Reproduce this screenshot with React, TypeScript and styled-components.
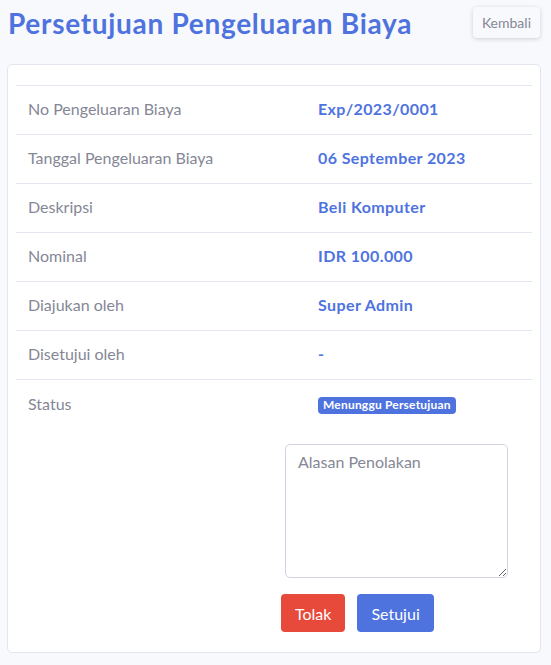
import React from "react";
import styled, { createGlobalStyle } from "styled-components";

const Global = createGlobalStyle`
  html, body { margin: 0; padding: 0; background: #f8f9fc; }
  body { font-family: Lato, "Noto Sans", sans-serif; color: #858796; }
  * { box-sizing: border-box; }
`;

const Page = styled.div`
  padding: 0 10px 12px 7px;
  width: 551px;
`;

const Header = styled.div`
  display: flex;
  justify-content: space-between;
  align-items: flex-start;
  padding: 7px 1px 0 1px;
  height: 64px;
`;

const Title = styled.h1`
  margin: 0;
  font-size: 28px;
  font-weight: 700;
  line-height: 33px;
  letter-spacing: 0.7px;
  color: #4e73df;
`;

const BackButton = styled.button`
  font-family: inherit;
  font-size: 14px;
  color: #858796;
  background: #f8f9fc;
  border: none;
  border-radius: 4px;
  box-shadow: 0 1px 4px rgba(58, 59, 69, 0.22);
  height: 31px;
  padding: 0 9px;
  cursor: pointer;
`;

const Card = styled.div`
  background: #fff;
  border: 1px solid #e3e6f0;
  border-radius: 5px;
  padding: 20px 8px 20px 8px;
`;

const Table = styled.div`
  border-top: 1px solid #e3e6f0;
`;

const Row = styled.div<{ $last?: boolean }>`
  display: grid;
  grid-template-columns: 290px 1fr;
  height: 49px;
  align-items: center;
  padding-bottom: 3px;
  border-bottom: ${(p) => (p.$last ? "none" : "1px solid #e3e6f0")};
`;

const Label = styled.div`
  padding-left: 12px;
  font-size: 16px;
  color: #858796;
`;

const Value = styled.div`
  padding-left: 12px;
  font-size: 16px;
  font-weight: 700;
  letter-spacing: 0.4px;
  color: #4e73df;
`;

const Badge = styled.span`
  display: inline-block;
  background: #4e73df;
  color: #fff;
  font-size: 12px;
  font-weight: 700;
  letter-spacing: 0.2px;
  border-radius: 4px;
  padding: 2px 5px 3px;
  line-height: 12px;
`;

const Form = styled.div`
  display: flex;
  flex-direction: column;
  align-items: flex-start;
  padding-left: 265px;
  margin-top: 15px;
  gap: 16px;
`;

const TextArea = styled.textarea`
  margin-left: 4px;
  width: 223px;
  height: 134px;
  border: 1px solid #d1d3e2;
  border-radius: 5px;
  padding: 7px 12px;
  font-family: inherit;
  font-size: 16px;
  color: #6e707e;
  &::placeholder { color: #858796; }
`;

const Actions = styled.div`
  display: flex;
  gap: 12px;
`;

const ActionButton = styled.button<{ $variant: "danger" | "primary" }>`
  font-family: inherit;
  font-size: 16px;
  color: #fff;
  border: none;
  border-radius: 4px;
  height: 38px;
  padding: 0 14px;
  background: ${(p) => (p.$variant === "danger" ? "#e74a3b" : "#4e73df")};
`;

const rows: [string, string][] = [
  ["No Pengeluaran Biaya", "Exp/2023/0001"],
  ["Tanggal Pengeluaran Biaya", "06 September 2023"],
  ["Deskripsi", "Beli Komputer"],
  ["Nominal", "IDR 100.000"],
  ["Diajukan oleh", "Super Admin"],
  ["Disetujui oleh", "-"],
];

export default function App() {
  return (
    <Page>
      <Global />
      <Header>
        <Title>Persetujuan Pengeluaran Biaya</Title>
        <BackButton>Kembali</BackButton>
      </Header>
      <Card>
        <Table>
          {rows.map(([l, v]) => (
            <Row key={l}>
              <Label>{l}</Label>
              <Value>{v}</Value>
            </Row>
          ))}
          <Row $last>
            <Label>Status</Label>
            <Value>
              <Badge>Menunggu Persetujuan</Badge>
            </Value>
          </Row>
        </Table>
        <Form>
          <TextArea placeholder="Alasan Penolakan" />
          <Actions>
            <ActionButton $variant="danger">Tolak</ActionButton>
            <ActionButton $variant="primary">Setujui</ActionButton>
          </Actions>
        </Form>
      </Card>
    </Page>
  );
}
